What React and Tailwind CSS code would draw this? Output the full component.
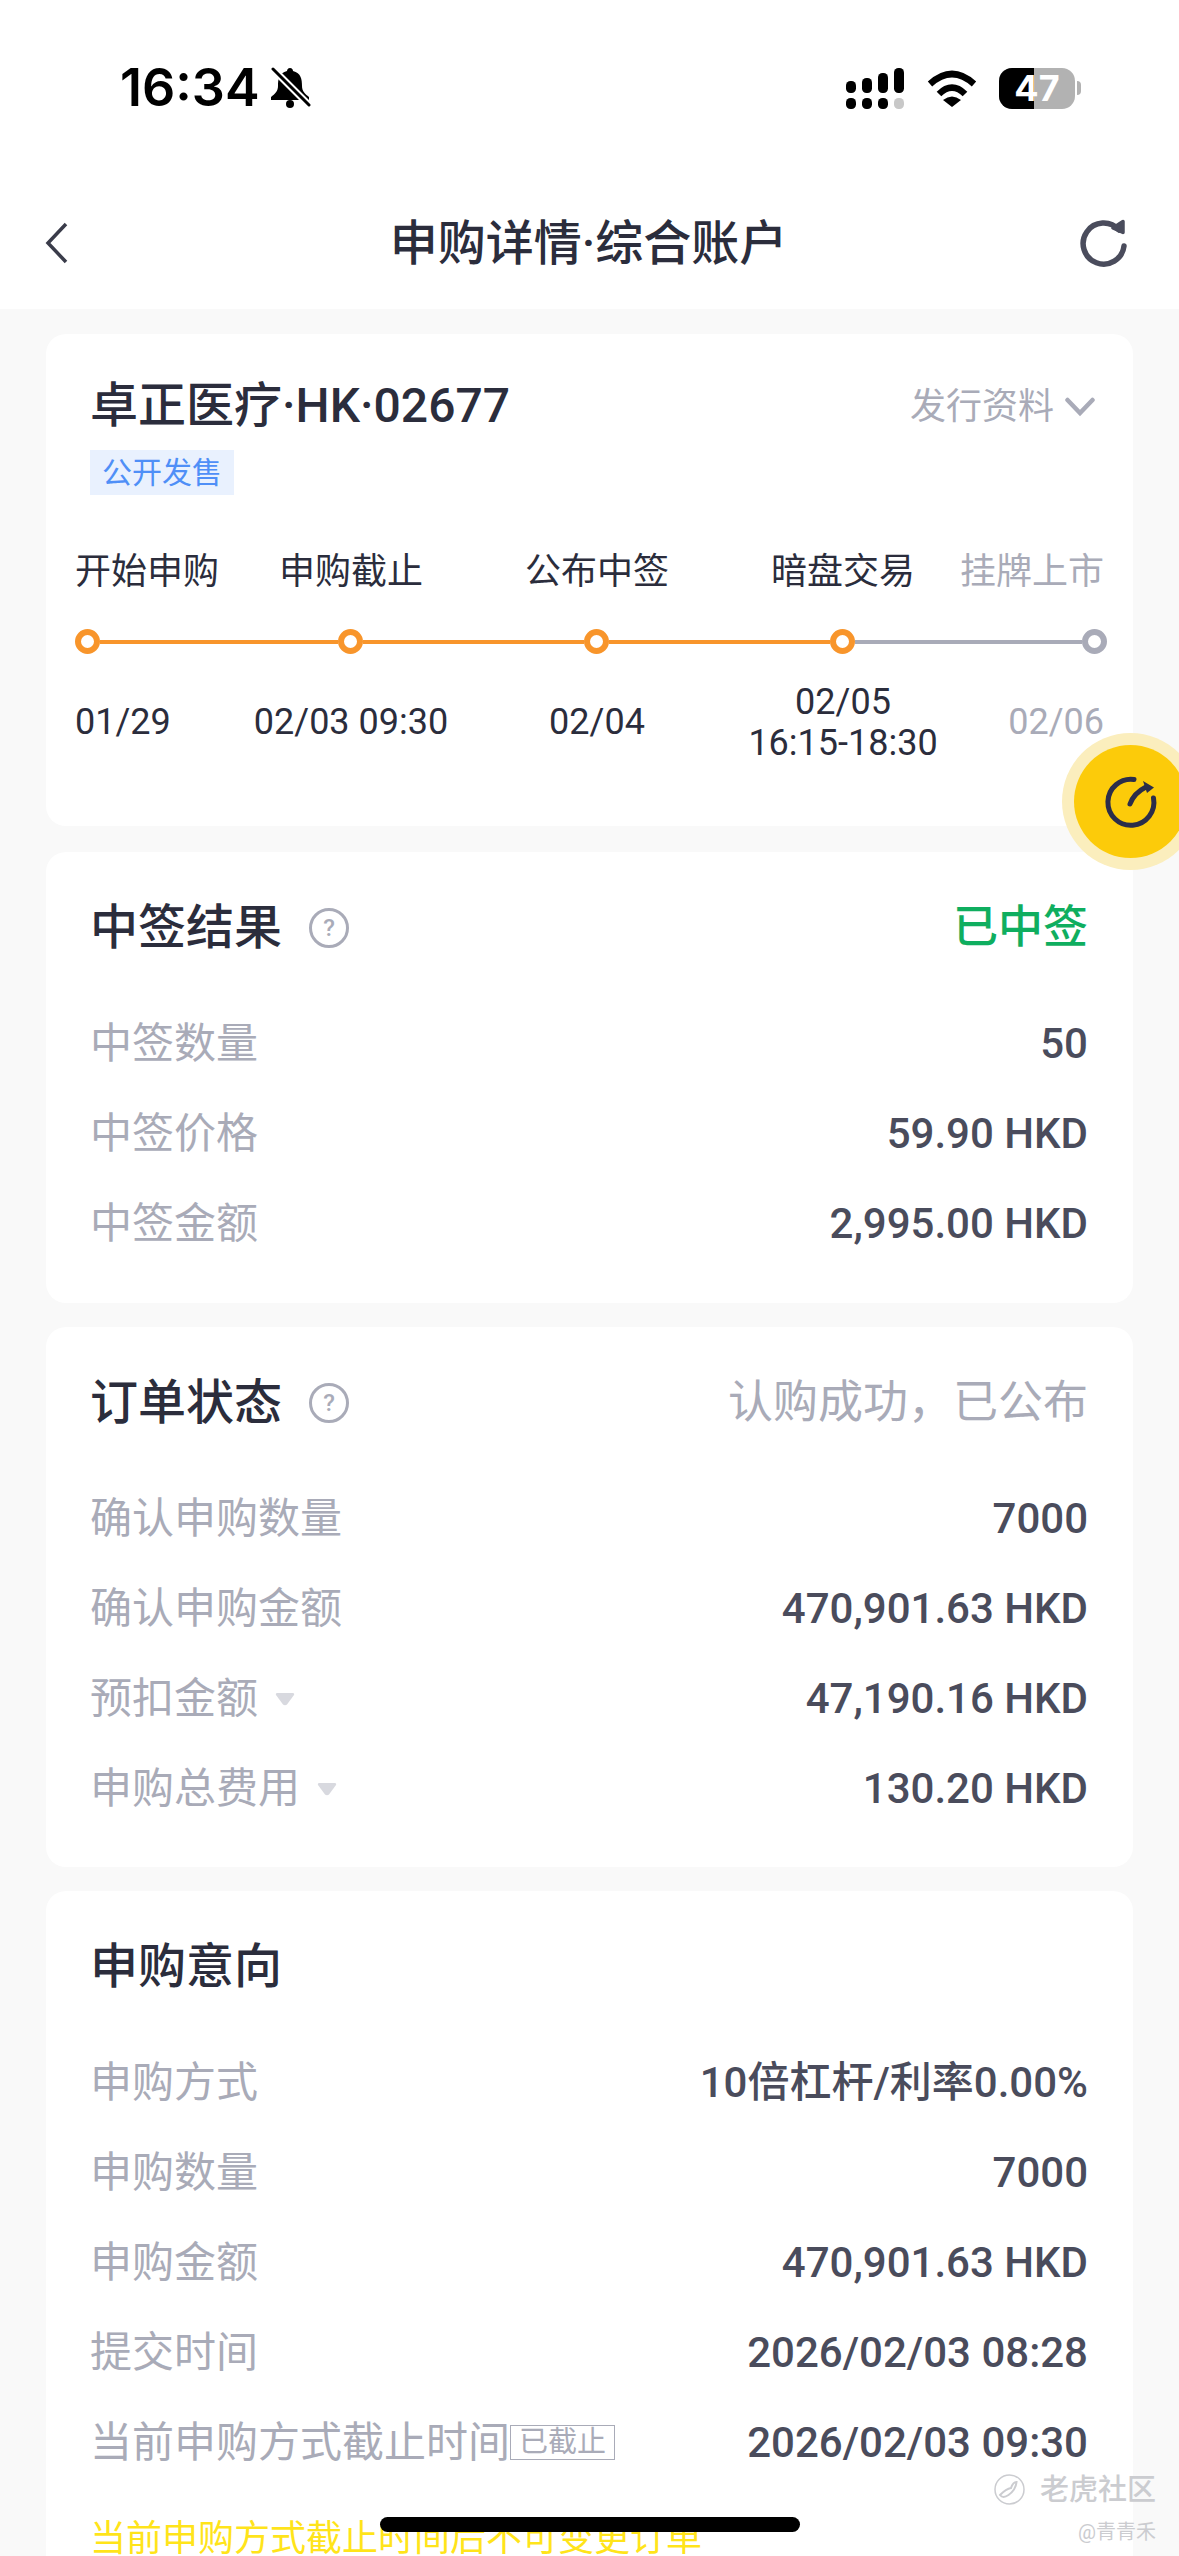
import React from "react"

const steps = [
  { label: "开始申购", date: ["01/29"], align: "justify-start text-left" },
  { label: "申购截止", date: ["02/03 09:30"], align: "justify-center text-center" },
  { label: "公布中签", date: ["02/04"], align: "justify-center text-center" },
  { label: "暗盘交易", date: ["02/05", "16:15-18:30"], align: "justify-center text-center" },
  { label: "挂牌上市", date: ["02/06"], align: "justify-end text-right", muted: true },
]

const Row = ({ label, value, caret, badge }) => (
  <div className="flex h-[90px] items-center justify-between">
    <div className="flex items-center text-[42px] text-[#a9abb8]">
      <span>{label}</span>
      {caret && (
        <svg className="ml-[17px] mt-[2px]" width="20" height="14" viewBox="0 0 20 14">
          <path d="M2 1h16c1 0 1.500 1 1 2l-7 9.500c-1 1-3 1-4 0L1 3C.5 2 1 1 2 1z" fill="#d8d9df" />
        </svg>
      )}
      {badge && (
        <span className="flex h-[35px] w-[105px] items-center justify-center border border-[#a9abb8] text-[29px] leading-none">
          {badge}
        </span>
      )}
    </div>
    <div className="text-[42px] font-medium text-[#4a4c5c]">{value}</div>
  </div>
)

const Help = () => (
  <span className="ml-[27px] flex h-[40px] w-[40px] items-center justify-center rounded-full border-[3px] border-[#a9abb8] text-[24px] font-medium leading-none text-[#a9abb8]">
    ?
  </span>
)

const Section = ({ title, help, status, statusColor, className, children }) => (
  <section className={`rounded-[20px] bg-white pl-[44px] pr-[45px] pt-[46px] ${className}`}>
    <div className="mb-[40px] flex h-[60px] items-center justify-between">
      <div className="flex items-center">
        <h2 className="text-[48px] font-medium text-[#2b2d3c]">{title}</h2>
        {help && <Help />}
      </div>
      {status && <span className={`text-[45px] ${statusColor}`}>{status}</span>}
    </div>
    {children}
  </section>
)

const Dot = ({ grey }) => (
  <span className={`h-[25px] w-[25px] shrink-0 rounded-full border-[6px] bg-white ${grey ? "border-[#a9abb8]" : "border-[#f8952b]"}`} />
)

const StatusBar = () => (
  <div className="flex h-[176px] items-center justify-between pl-[120px] pr-[98px]">
    <div className="flex items-center gap-[10px] text-black">
      <span className="font-['Inter',sans-serif] text-[52px] font-semibold leading-none">16:34</span>
      <svg width="42" height="42" viewBox="0 0 42 42">
        <path d="M20 1c-2 0-3 1.500-3 3C9 6 8 12 8 19c0 5-3 8-7 11v3h38v-3c-4-3-7-6-7-11 0-7-1-13-9-15 0-1.500-1-3-3-3z" fill="#000" />
        <circle cx="20" cy="37" r="4" fill="#000" />
        <path d="M3 2l36 36" stroke="#fff" strokeWidth="7" />
        <path d="M3 2l36 36" stroke="#000" strokeWidth="3" strokeLinecap="round" />
      </svg>
    </div>
    <div className="flex items-center">
      <svg width="58" height="41" viewBox="0 0 58 41">
        <rect x="0" y="13" width="10" height="12" rx="4.500" fill="#000" />
        <rect x="16" y="10" width="10" height="15" rx="4.500" fill="#000" />
        <rect x="32" y="5" width="10" height="20" rx="4.500" fill="#000" />
        <rect x="48" y="0" width="10" height="25" rx="4.500" fill="#000" />
        <rect x="0" y="30" width="10" height="11" rx="4.500" fill="#000" />
        <rect x="16" y="30" width="10" height="11" rx="4.500" fill="#000" />
        <rect x="32" y="30" width="10" height="11" rx="4.500" fill="#000" />
        <rect x="48" y="30" width="10" height="11" rx="4.500" fill="#c8c8c8" />
      </svg>
      <svg className="ml-[23px]" width="50" height="37" viewBox="0 0 50 37">
        <path d="M3 14Q25-6 47 14" fill="none" stroke="#000" strokeWidth="6.500" />
        <path d="M12 24Q25 11 38 24" fill="none" stroke="#000" strokeWidth="6.500" />
        <path d="M16 30Q25 23 34 30L25 37z" fill="#000" />
      </svg>
      <div className="relative ml-[22px] flex h-[41px] w-[76px] overflow-hidden rounded-[13px] bg-[#b2b2b2]">
        <span className="h-full w-[35px] bg-black" />
        <span className="absolute inset-0 flex items-center justify-center font-['Inter',sans-serif] text-[36px] font-bold leading-none text-white">47</span>
      </div>
      <span className="ml-[2px] h-[14px] w-[4px] rounded-r-full bg-[#b2b2b2]" />
    </div>
  </div>
)

const NavBar = () => (
  <div className="flex h-[133px] items-center justify-between pl-[45px] pr-[51px]">
    <div className="w-[54px]">
      <svg width="24" height="42" viewBox="0 0 24 42">
        <path d="M21 2L3 21l18 19" fill="none" stroke="#3a3c4a" strokeWidth="3.500" />
      </svg>
    </div>
    <h1 className="pt-[2px] text-[48px] font-medium text-[#2b2d3c]">申购详情·综合账户</h1>
    <svg width="50" height="50" viewBox="0 0 50 50">
      <path d="M41 12A20.500 20.500 0 1 0 46 28" fill="none" stroke="#4a4c5c" strokeWidth="5.500" strokeLinecap="round" />
      <path d="M45 3.500v11L35 10z" fill="#4a4c5c" stroke="#4a4c5c" strokeWidth="3.500" strokeLinejoin="round" />
    </svg>
  </div>
)

const IssueCard = () => (
  <section className="mb-[2px] rounded-[20px] bg-white pl-[29px] pr-[29px] pt-[42px] pb-[62px]">
    <div className="flex h-[60px] items-center justify-between pl-[15px] pr-[9px]">
      <h2 className="text-[48px] font-medium text-[#2b2d3c]">卓正医疗·HK·02677</h2>
      <div className="flex items-center gap-[11px] pt-[2px] text-[36px] text-[#a9abb8]">
        <span>发行资料</span>
        <svg width="30" height="20" viewBox="0 0 30 20">
          <path d="M2.500 3L15 16 27.500 3" fill="none" stroke="#a9abb8" strokeWidth="4.500" strokeLinecap="round" />
        </svg>
      </div>
    </div>
    <span className="ml-[15px] mt-[14px] flex h-[45px] w-[144px] items-center justify-center bg-[#e9f1fe] text-[30px] leading-none text-[#4f8ff7]">
      公开发售
    </span>
    <div className="mt-[55px] grid grid-cols-[153px_246px_246px_246px_138px] text-[36px] leading-[44px] text-[#2b2d3c]">
      {steps.map((s) => (
        <div key={s.label} className={`flex whitespace-nowrap ${s.align} ${s.muted ? "text-[#a9abb8]" : ""}`}>
          {s.label}
        </div>
      ))}
    </div>
    <div className="-mr-[3px] mt-[35px] flex items-center">
      <Dot />
      <span className="h-[4px] w-[238px] bg-[#f8952b]" />
      <Dot />
      <span className="h-[4px] w-[221px] bg-[#f8952b]" />
      <Dot />
      <span className="h-[4px] w-[221px] bg-[#f8952b]" />
      <Dot />
      <span className="h-[4px] flex-1 bg-[#a9abb8]" />
      <Dot grey />
    </div>
    <div className="mt-[27px] grid h-[83px] grid-cols-[153px_246px_246px_246px_138px] items-center text-[36px] leading-[41px] text-[#2b2d3c]">
      {steps.map((s) => (
        <div key={s.label} className={`${s.align} ${s.muted ? "text-[#a9abb8]" : ""}`}>
          {s.date.map((d) => (
            <div key={d}>{d}</div>
          ))}
        </div>
      ))}
    </div>
  </section>
)

export default function App() {
  return (
    <div className="relative h-[2556px] w-[1179px] overflow-hidden bg-[#f9f9f9] font-['Roboto','Noto_Sans_CJK_SC',sans-serif]">
      <header className="h-[309px] bg-white">
        <StatusBar />
        <NavBar />
      </header>

      <main className="flex flex-col gap-[24px] pl-[46px] pr-[46px] pt-[25px]">
        <IssueCard />

        <Section title="中签结果" help status="已中签" statusColor="font-medium text-[#0fae5f]" className="pb-[35px]">
          <Row label="中签数量" value="50" />
          <Row label="中签价格" value="59.90 HKD" />
          <Row label="中签金额" value="2,995.00 HKD" />
        </Section>

        <Section title="订单状态" help status="认购成功，已公布" statusColor="text-[#a9abb8]" className="pb-[34px]">
          <Row label="确认申购数量" value="7000" />
          <Row label="确认申购金额" value="470,901.63 HKD" />
          <Row label="预扣金额" value="47,190.16 HKD" caret />
          <Row label="申购总费用" value="130.20 HKD" caret />
        </Section>

        <Section title="申购意向" className="pb-[35px]">
          <Row label="申购方式" value="10倍杠杆/利率0.00%" />
          <Row label="申购数量" value="7000" />
          <Row label="申购金额" value="470,901.63 HKD" />
          <Row label="提交时间" value="2026/02/03 08:28" />
          <Row label="当前申购方式截止时间" value="2026/02/03 09:30" badge="已截止" />
          <p className="mt-[27px] text-[36px] leading-[50px] text-[#ffe41a]">当前申购方式截止时间后不可变更订单</p>
        </Section>
      </main>

      {/* floating button */}
      <div className="absolute left-[1062px] top-[733px] flex h-[137px] w-[137px] items-center justify-center rounded-full bg-[#fbeebd]">
        <div className="flex h-[113px] w-[113px] items-center justify-center rounded-full bg-[#fccb0a]">
          <svg width="60" height="60" viewBox="0 0 60 60">
            <path d="M33 7.500A23 23 0 1 0 52.500 26" fill="none" stroke="#2b2d4a" strokeWidth="5" strokeLinecap="round" />
            <path d="M29 32Q33 21 45 15" fill="none" stroke="#2b2d4a" strokeWidth="5" strokeLinecap="round" />
            <path d="M42 9l11 6.500L46 21z" fill="#2b2d4a" />
          </svg>
        </div>
      </div>

      {/* watermark */}
      <div className="absolute left-[992px] top-[2473px] flex w-[164px] flex-col items-end text-[#cbccd0]">
        <div className="flex h-[32px] items-center gap-[15px]">
          <svg width="31" height="31" viewBox="0 0 31 31">
            <circle cx="15.500" cy="15.500" r="14.500" fill="none" stroke="#cbccd0" strokeWidth="1.500" />
            <path d="M6 21c2 2.500 5 2.500 8.500 0s7.500-7 8-13c-2.500 0-4.500 3-5.500 6-3 .5-7 3-11 7z" fill="none" stroke="#cbccd0" strokeWidth="2" />
          </svg>
          <span className="pt-[3px] text-[29px] font-medium leading-none">老虎社区</span>
        </div>
        <span className="mt-[17px] text-[20px] leading-none">@青青禾</span>
      </div>

      {/* home indicator */}
      <div className="absolute left-[380px] top-[2517px] h-[15px] w-[420px] rounded-full bg-black" />
    </div>
  )
}
